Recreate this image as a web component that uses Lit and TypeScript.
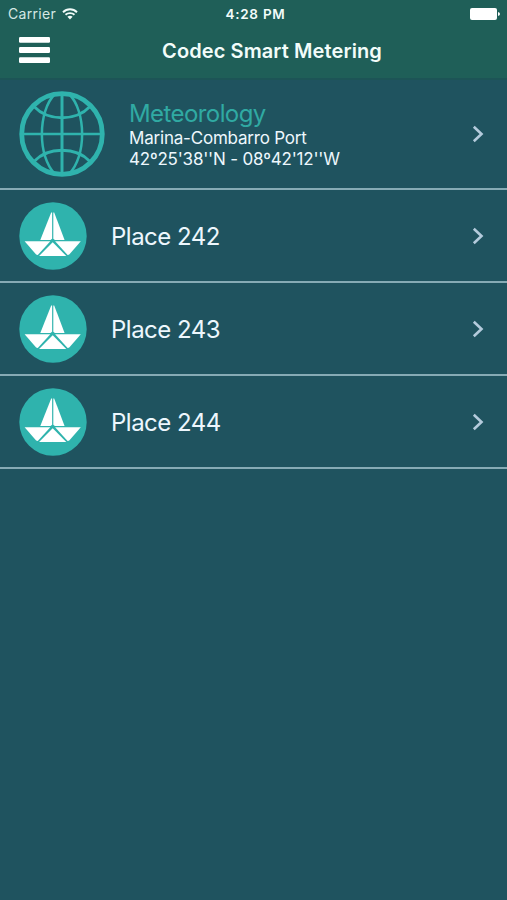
import { LitElement, html, css, svg } from "lit";
import { customElement, property } from "lit/decorators.js";

const globe = svg`<svg width="86" height="86" viewBox="0 0 86 86" fill="none" stroke="#2fb3ad">
  <circle cx="43" cy="43" r="40.300" stroke-width="4.800"/>
  <path stroke-width="3" d="M43 3V83"/>
  <path stroke-width="2.400" d="M3 43H83"/>
  <path stroke-width="2.500" d="M36 3C18.500 20 18.500 66 36 83M50 3C67.500 20 67.500 66 50 83"/>
  <path stroke-width="2.800" d="M15 15.500C29 30.500 57 30.500 71 15.500M15 70.500C29 55.500 57 55.500 71 70.500"/>
</svg>`;

const boat = svg`<svg width="68" height="68" viewBox="0 0 68 68">
  <circle cx="34" cy="34" r="33.700" fill="#2fb3ad"/>
  <g fill="#fff">
    <path d="M32.200 10.500H33.100V36.800L31.500 38.100H21.300Z"/>
    <path d="M35.200 10.500H34.300V36.800L35.900 38.100H45.600Z"/>
    <path d="M5.600 39.200H31.300L18.800 52.900Q17.600 52.900 16.900 52.200Z"/>
    <path d="M61.800 39.200H36.100L48.600 52.900Q49.800 52.900 50.500 52.200Z"/>
    <path d="M33.700 40.200L47.300 54H20.100Z"/>
  </g>
</svg>`;

@customElement("list-row")
class ListRow extends LitElement {
  @property() kind = "place";
  @property() heading = "";
  @property({ attribute: false }) lines: string[] = [];

  static styles = css`
    :host { display: block; }
    .row {
      box-sizing: border-box;
      display: flex;
      align-items: center;
      height: 93px;
      padding: 0 23px 0 19px;
      border-bottom: 2px solid #86abb5;
      color: #edf7fd;
    }
    .station { height: 110px; }
    .icon { display: flex; flex: none; }
    .text { flex: 1; margin-left: 24px; white-space: nowrap; }
    .name { font-size: 24px; line-height: 30px; letter-spacing: -0.5px; padding-top: 2px; }
    .station .text { padding-top: 2px; }
    .station .name { color: #30aaa3; line-height: 28px; letter-spacing: -0.58px; padding-top: 0; }
    .line { font-size: 17px; line-height: 21px; letter-spacing: -0.2px; }
    .chevron { flex: none; }
  `;

  render() {
    const station = this.kind === "station";
    return html`<div class="row ${station ? "station" : ""}">
      <span class="icon">${station ? globe : boat}</span>
      <div class="text">
        <div class="name">${this.heading}</div>
        ${this.lines.map((l) => html`<div class="line">${l}</div>`)}
      </div>
      <svg class="chevron" width="12" height="18" viewBox="0 0 12 18">
        <path d="M1.800 1.800L9.500 9L1.800 16.200" fill="none" stroke="#b4cbdc" stroke-width="2.600"/>
      </svg>
    </div>`;
  }
}

@customElement("app-root")
class AppRoot extends LitElement {
  static styles = css`
    :host {
      display: block;
      height: 900px;
      overflow: hidden;
      background: #1f535f;
      font-family: Inter, "Liberation Sans", sans-serif;
    }
    .top { box-sizing: border-box; height: 80px; background: #1f5f58; border-bottom: 2px solid #1d5456; color: #f2fcfa; }
    .status {
      display: grid;
      grid-template-columns: 1fr auto 1fr;
      align-items: center;
      height: 27px;
      padding: 0 7px 0 8px;
    }
    .carrier { display: flex; align-items: center; gap: 6px; font-size: 14px; color: #d5e8e4; letter-spacing: 0.3px; }
    .time { font-size: 13.5px; font-weight: 600; letter-spacing: 0.75px; padding-left: 3px; }
    .battery { justify-self: end; }
    .nav { display: grid; grid-template-columns: 31px 1fr 31px; align-items: center; height: 47px; padding: 0 0 0 19px; }
    .nav svg { margin-top: -1px; }
    .title { text-align: center; font-size: 20px; font-weight: 600; white-space: nowrap; letter-spacing: 0.1px; padding-left: 18px; }
  `;

  render() {
    return html`
      <header class="top">
        <div class="status">
          <div class="carrier"><span>Carrier</span>
            <svg width="16" height="12" viewBox="0 0 16 12" fill="none" stroke="#f2fcfa" stroke-width="1.900">
              <path d="M1 4.200C5 .3 11 .3 15 4.200M3.500 6.800C6 4.500 10 4.500 12.500 6.800"/>
              <path fill="#f2fcfa" stroke="none" d="M8 11.600L5.400 8.800Q8 6.900 10.600 8.800Z"/>
            </svg>
          </div>
          <div class="time">4:28 PM</div>
          <svg class="battery" width="30" height="12" viewBox="0 0 30 12" fill="#fff">
            <rect width="27" height="12" rx="2"/><path d="M28 4Q30 4.500 30 6T28 8Z"/>
          </svg>
        </div>
        <div class="nav">
          <svg width="31" height="26" viewBox="0 0 31 26" fill="#fff">
            <rect width="31" height="5.800" rx="1.200"/><rect y="10.100" width="31" height="5.800" rx="1.200"/><rect y="20.200" width="31" height="5.800" rx="1.200"/>
          </svg>
          <div class="title">Codec Smart Metering</div>
        </div>
      </header>
      <main>
        <list-row kind="station" heading="Meteorology" .lines=${["Marina-Combarro Port", "42º25'38''N - 08º42'12''W"]}></list-row>
        ${[242, 243, 244].map((n) => html`<list-row heading="Place ${n}"></list-row>`)}
      </main>`;
  }
}
